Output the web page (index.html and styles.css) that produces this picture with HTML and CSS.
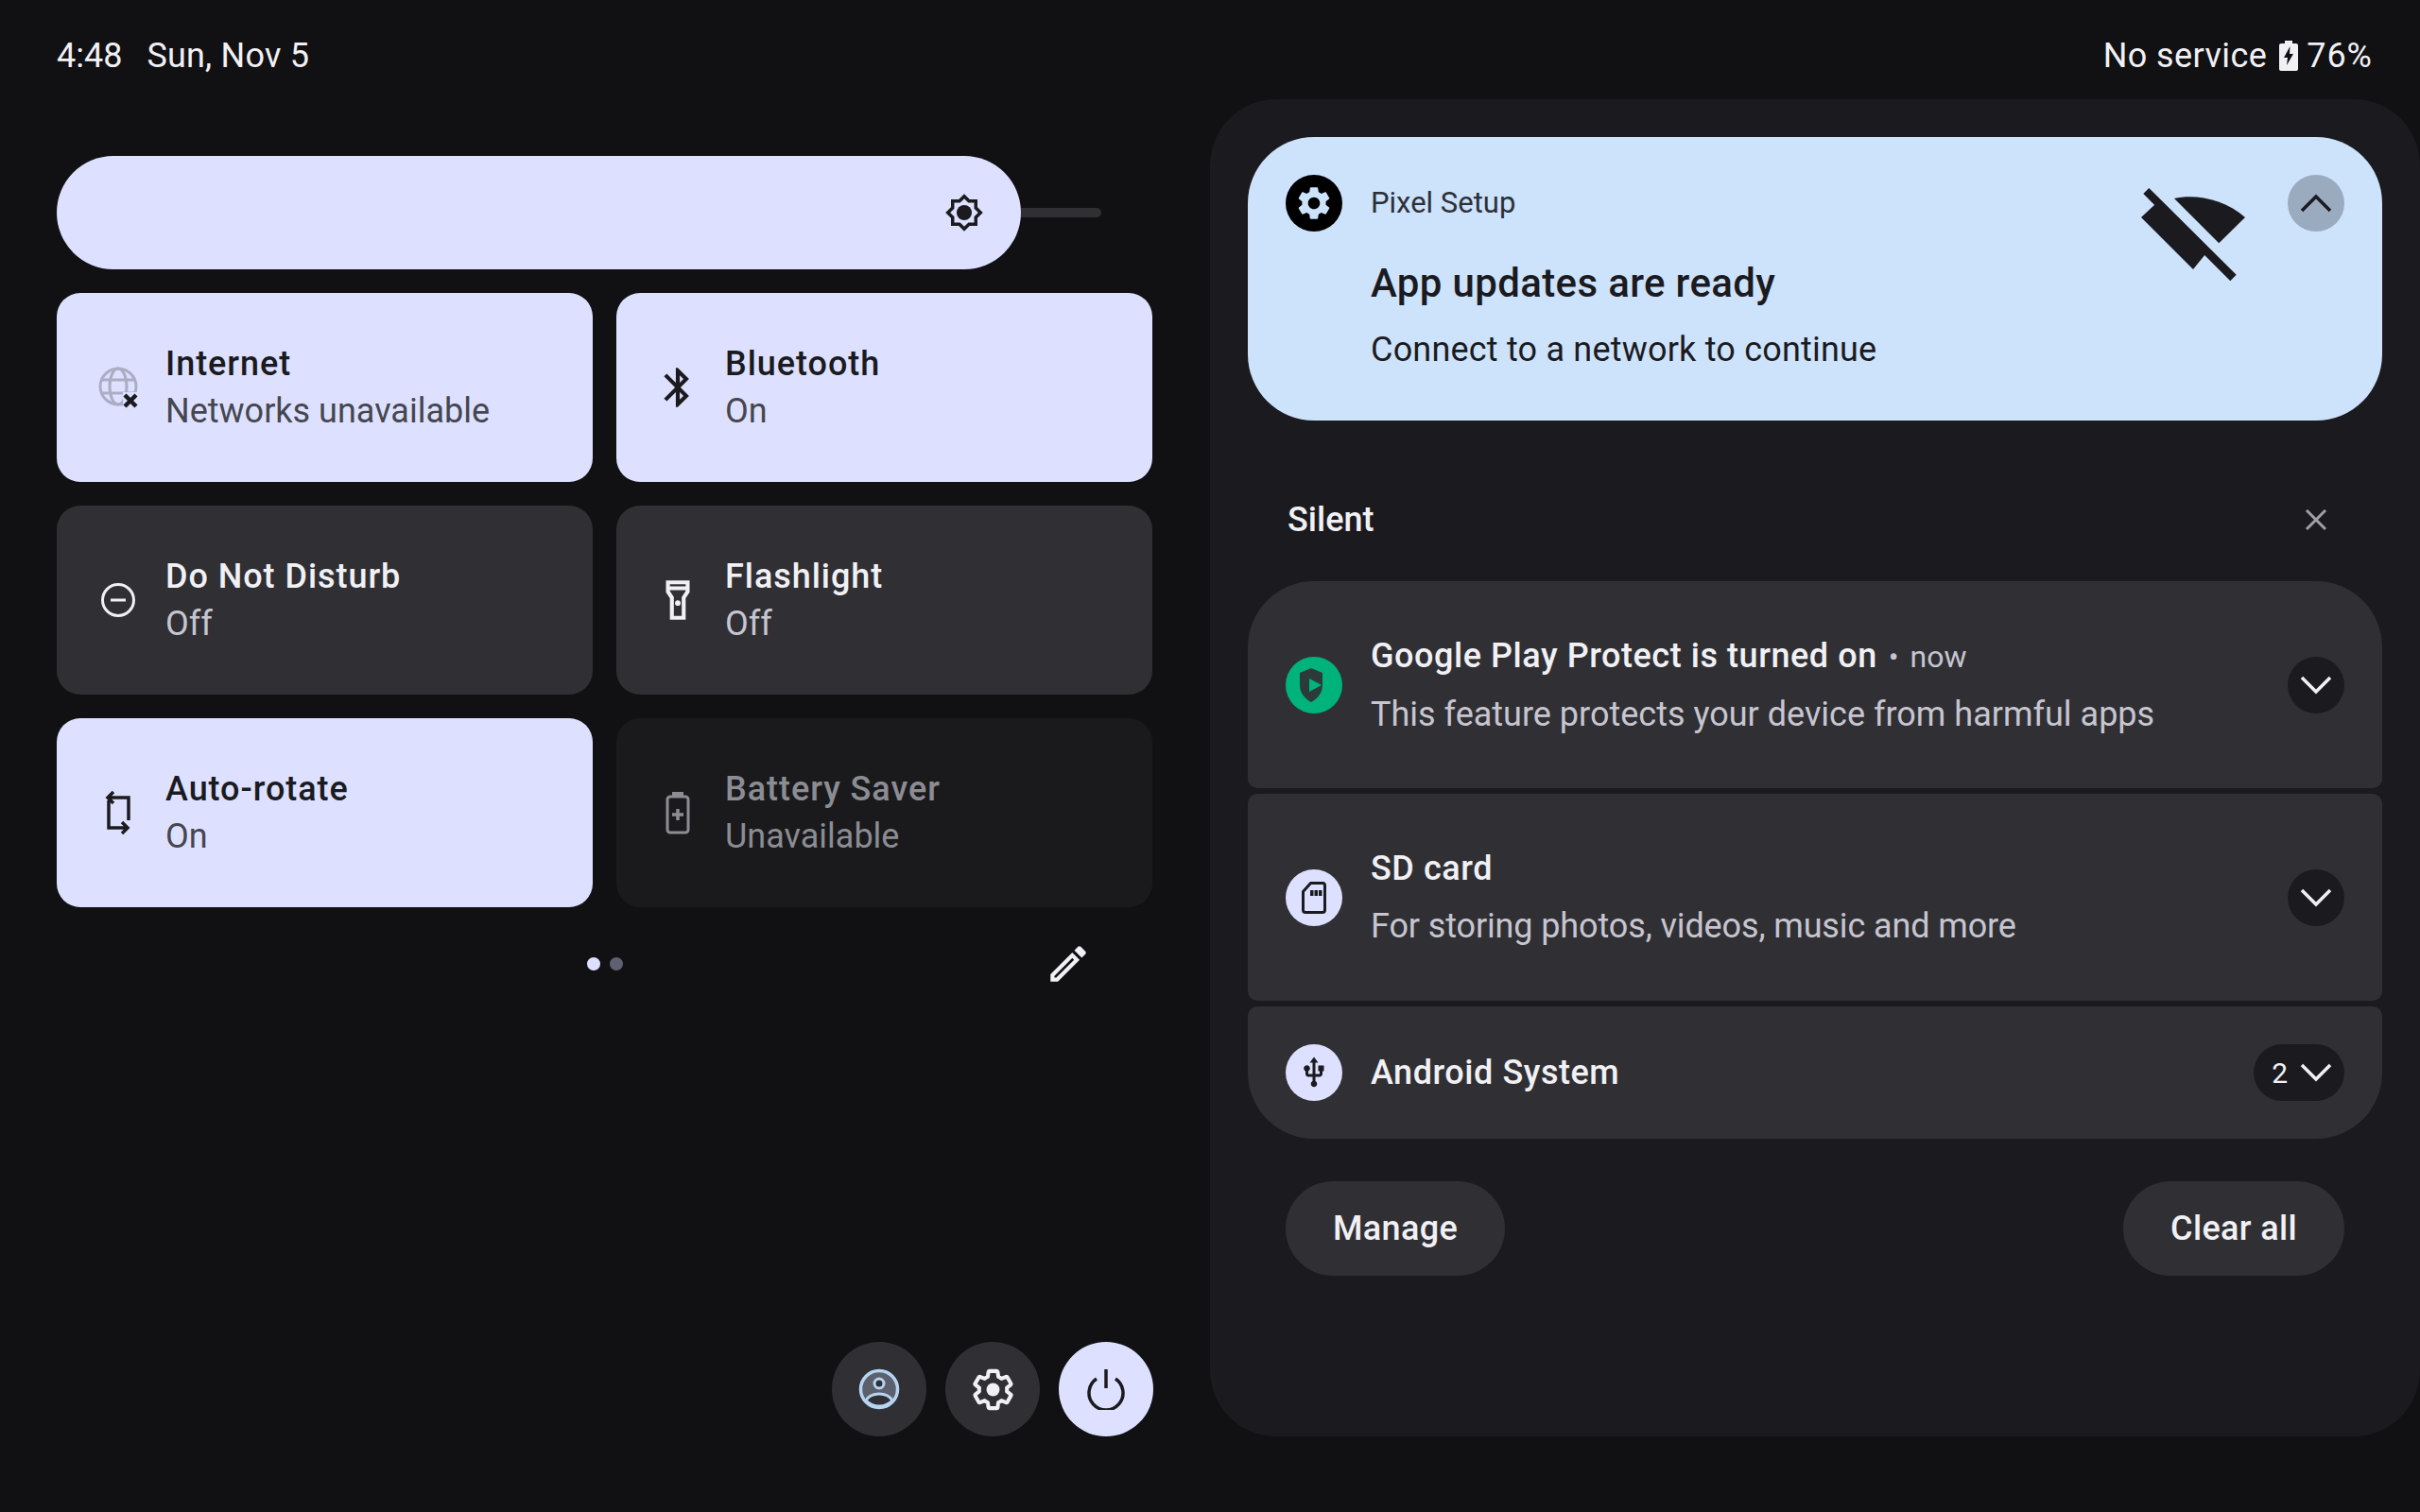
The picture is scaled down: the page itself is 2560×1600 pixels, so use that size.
FILE: index.html
```html
<!DOCTYPE html>
<html>
<head>
  <meta charset="UTF-8">
  <title>Quick Settings</title>
  <link rel="stylesheet" href="styles.css">
</head>
<body>
  <div class="status-bar">
    <div class="status-left"><span>4:48</span><span class="status-date">Sun, Nov 5</span></div>
    <div class="status-right">
      <span class="status-net">No service</span>
      <svg class="status-battery" width="20" height="32" viewBox="0 0 20 32"><path fill="#f1f0f4" d="M6 0h8v3h4a2 2 0 0 1 2 2v25a2 2 0 0 1-2 2H2a2 2 0 0 1-2-2V5a2 2 0 0 1 2-2h4z"/><path fill="#111113" d="M11.500 6 5 18h4l-1 8 7-12h-4z"/></svg>
      <span class="status-pct">76%</span>
    </div>
  </div>

  <div class="main">
    <div class="quick">
      <div class="slider">
        <div class="slider-thumb">
          <svg width="42" height="42" viewBox="0 0 24 24"><path fill="#1b1b1f" d="M20 8.690V4h-4.690L12 .69 8.690 4H4v4.690L.69 12 4 15.310V20h4.690L12 23.310 15.310 20H20v-4.690L23.310 12 20 8.690zm-2 5.790V18h-3.520L12 20.480 9.520 18H6v-3.520L3.520 12 6 9.520V6h3.520L12 3.520 14.480 6H18v3.520L20.480 12 18 14.480z"/><circle cx="12" cy="12" r="4.600" fill="#1b1b1f"/></svg>
        </div>
        <div class="slider-track"></div>
      </div>

      <div class="tiles">
        <div class="tile on">
          <div class="tile-icon">
            <svg width="44" height="44" viewBox="0 0 44 44"><g fill="none" stroke="#abadc4" stroke-width="3"><circle cx="22" cy="21" r="19"/><ellipse cx="22" cy="21" rx="9" ry="19"/><path d="M4 14h36M4 28h36"/></g><path fill="#dde1ff" d="M27 27h17v17H27z"/><path fill="none" stroke="#1b1b1f" stroke-width="4.500" d="M29 30l12 12M41 30L29 42"/></svg>
          </div>
          <div class="tile-text"><div class="tile-title">Internet</div><div class="tile-sub">Networks unavailable</div></div>
        </div>
        <div class="tile on">
          <div class="tile-icon">
            <svg width="50" height="50" viewBox="0 0 24 24"><path fill="#1b1b1f" d="M17.710 7.710L12 2h-1v7.590L6.410 5 5 6.410 10.590 12 5 17.590 6.410 19 11 14.410V22h1l5.710-5.710-4.300-4.290 4.300-4.290zM13 5.830l1.880 1.880L13 9.590V5.830zm1.880 10.460L13 18.170v-3.760l1.880 1.880z"/></svg>
          </div>
          <div class="tile-text"><div class="tile-title">Bluetooth</div><div class="tile-sub">On</div></div>
        </div>
        <div class="tile off">
          <div class="tile-icon">
            <svg width="38" height="38" viewBox="0 0 38 38"><circle cx="19" cy="19" r="16.500" fill="none" stroke="#f1f0f4" stroke-width="3"/><path stroke="#f1f0f4" stroke-width="3" d="M11 19h16"/></svg>
          </div>
          <div class="tile-text"><div class="tile-title">Do Not Disturb</div><div class="tile-sub">Off</div></div>
        </div>
        <div class="tile off">
          <div class="tile-icon">
            <svg width="50" height="50" viewBox="0 0 24 24"><path fill="#f1f0f4" d="M18 2H6v6l2 3v11h8V11l2-3V2zm-2 2v1H8V4h8zm-2 6.400V20h-4v-9.600L8 7.400V7h8v.4l-2 3z"/><circle cx="12" cy="13.500" r="1.400" fill="#f1f0f4"/></svg>
          </div>
          <div class="tile-text"><div class="tile-title">Flashlight</div><div class="tile-sub">Off</div></div>
        </div>
        <div class="tile on">
          <div class="tile-icon">
            <svg width="28" height="48" viewBox="0 0 28 48"><path fill="none" stroke="#1b1b1f" stroke-width="3.500" d="M4 8h21v24M9 2L3 8l6 6M4 11v29h20M18 34l6 6-6 6"/></svg>
          </div>
          <div class="tile-text"><div class="tile-title">Auto-rotate</div><div class="tile-sub">On</div></div>
        </div>
        <div class="tile disabled">
          <div class="tile-icon">
            <svg width="26" height="46" viewBox="0 0 26 46"><path fill="#8c8c94" d="M7 1h12v4H7z"/><rect x="2" y="6" width="22" height="38" rx="3" fill="none" stroke="#8c8c94" stroke-width="3"/><path stroke="#8c8c94" stroke-width="3.500" d="M7 25h12M13 19v12"/></svg>
          </div>
          <div class="tile-text"><div class="tile-title">Battery Saver</div><div class="tile-sub">Unavailable</div></div>
        </div>
      </div>

      <div class="pager">
        <div></div>
        <div class="dots"><span class="dot active"></span><span class="dot"></span></div>
        <svg class="pencil" width="50" height="50" viewBox="0 0 24 24"><path fill="#f1f0f4" d="M14.060 9.020l.92.92L5.920 19H5v-.92l9.060-9.060M17.660 3c-.25 0-.51.1-.7.29l-1.830 1.830 3.750 3.750 1.830-1.830c.39-.39.39-1.020 0-1.410l-2.340-2.340c-.2-.2-.45-.29-.71-.29zm-3.600 3.190L3 17.250V21h3.750L17.810 9.940l-3.750-3.750z"/></svg>
      </div>

      <div class="actions">
        <div class="round">
          <svg width="44" height="44" viewBox="0 0 44 44"><circle cx="22" cy="22" r="19.500" fill="#5b606c" stroke="#b6d4f2" stroke-width="3.500"/><circle cx="22" cy="16" r="5" fill="#303034" stroke="#b6d4f2" stroke-width="3"/><path fill="#303034" stroke="#b6d4f2" stroke-width="3" d="M8 34c3-5 9-7 14-7s11 2 14 7c-3.500 4-8.500 6-14 6s-10.500-2-14-6z"/></svg>
        </div>
        <div class="round">
          <svg width="49" height="49" viewBox="0 0 24 24"><path fill="none" stroke="#f1f0f4" stroke-width="2" stroke-linejoin="round" d="M19.140 12.940c.04-.3.06-.61.06-.94 0-.32-.02-.64-.07-.94l2.030-1.580c.18-.14.23-.41.12-.61l-1.920-3.320c-.12-.22-.37-.29-.59-.22l-2.390.96c-.5-.38-1.030-.7-1.620-.94l-.36-2.540c-.04-.24-.24-.41-.48-.41h-3.840c-.24 0-.43.17-.47.41l-.36 2.540c-.59.24-1.130.57-1.620.94l-2.390-.96c-.22-.08-.47 0-.59.22L2.740 8.870c-.12.21-.08.47.12.61l2.030 1.580c-.05.3-.09.63-.09.94s.02.64.07.94l-2.030 1.580c-.18.14-.23.41-.12.61l1.920 3.320c.12.22.37.29.59.22l2.390-.96c.5.38 1.030.7 1.620.94l.36 2.540c.05.24.24.41.48.41h3.840c.24 0 .44-.17.47-.41l.36-2.540c.59-.24 1.130-.56 1.620-.94l2.390.96c.22.08.47 0 .59-.22l1.920-3.320c.12-.22.07-.47-.12-.61l-2.010-1.580z"/><circle cx="12" cy="12" r="3.400" fill="#f1f0f4"/></svg>
        </div>
        <div class="round power">
          <svg width="42" height="44" viewBox="0 0 42 44"><path fill="none" stroke="#1b1b1f" stroke-width="3.500" d="M11 11a18 18 0 1 0 20 0"/><path stroke="#1b1b1f" stroke-width="3.500" d="M21 1v20"/></svg>
        </div>
      </div>
    </div>

    <div class="panel">
      <div class="note-top">
        <div class="app-icon black">
          <svg width="42" height="42" viewBox="0 0 24 24"><path fill="#cde2fb" d="M19.140 12.940c.04-.3.06-.61.06-.94 0-.32-.02-.64-.07-.94l2.030-1.580c.18-.14.23-.41.12-.61l-1.920-3.320c-.12-.22-.37-.29-.59-.22l-2.390.96c-.5-.38-1.030-.7-1.620-.94l-.36-2.540c-.04-.24-.24-.41-.48-.41h-3.840c-.24 0-.43.17-.47.41l-.36 2.540c-.59.24-1.130.57-1.620.94l-2.390-.96c-.22-.08-.47 0-.59.22L2.740 8.870c-.12.21-.08.47.12.61l2.030 1.580c-.05.3-.09.63-.09.94s.02.64.07.94l-2.030 1.580c-.18.14-.23.41-.12.61l1.920 3.320c.12.22.37.29.59.22l2.390-.96c.5.38 1.030.7 1.620.94l.36 2.540c.05.24.24.41.48.41h3.840c.24 0 .44-.17.47-.41l.36-2.540c.59-.24 1.130-.56 1.620-.94l2.390.96c.22.08.47 0 .59-.22l1.920-3.320c.12-.22.07-.47-.12-.61l-2.010-1.580zM12 15.600c-1.980 0-3.600-1.620-3.600-3.600s1.620-3.600 3.600-3.600 3.600 1.620 3.600 3.600-1.620 3.600-3.600 3.600z"/></svg>
        </div>
        <div class="note-top-text">
          <div class="note-app">Pixel Setup</div>
          <div class="note-head">App updates are ready</div>
          <div class="note-desc">Connect to a network to continue</div>
        </div>
        <svg class="wifi-off" width="110" height="100" viewBox="0 0 110 100"><g fill="#1b1b1f"><path d="M2.300 6L8.300 0l92.400 91.700-6.400 6.600z"/><path d="M0 31l15-14 53 53-13 16z"/><path d="M35 11C58 6 88 12 110 31L82.300 58.300z"/></g></svg>
        <div class="chevron up">
          <svg width="34" height="22" viewBox="0 0 34 22"><path fill="none" stroke="#1b1b1f" stroke-width="3.500" d="M2 19L17 4l15 15"/></svg>
        </div>
      </div>

      <div class="silent-row">
        <span class="silent-label">Silent</span>
        <svg width="24" height="24" viewBox="0 0 24 24"><path fill="none" stroke="#a0a0a6" stroke-width="3" d="M2 2l20 20M22 2L2 22"/></svg>
      </div>

      <div class="note-list">
        <div class="note first">
          <div class="app-icon green">
            <svg width="60" height="60" viewBox="0 0 60 60"><path fill="#2c3b3a" d="M27 12l12 5v13c0 8-5 14-12 18-7-4-12-10-12-18V17z"/><path fill="#00b37a" d="M25 23l13 7-13 7z"/></svg>
          </div>
          <div class="note-text">
            <div class="note-title">Google Play Protect is turned on<span class="note-time"><span class="note-bullet">•</span>now</span></div>
            <div class="note-sub">This feature protects your device from harmful apps</div>
          </div>
          <div class="chevron"><svg width="34" height="22" viewBox="0 0 34 22"><path fill="none" stroke="#f1f0f4" stroke-width="3.500" d="M2 3l15 15L32 3"/></svg></div>
        </div>
        <div class="note">
          <div class="app-icon lilac">
            <svg width="26" height="34" viewBox="0 0 26 34"><path fill="none" stroke="#1b1b1f" stroke-width="3" stroke-linejoin="round" d="M9.500 1.500H22a2.500 2.500 0 0 1 2.500 2.500v26a2.500 2.500 0 0 1-2.500 2.500H4A2.500 2.500 0 0 1 1.500 30V10.500z"/><path fill="#1b1b1f" d="M9 9h3.500v6H9zM13.500 9H17v6h-3.500zM18 9h3.500v6H18z"/></svg>
          </div>
          <div class="note-text">
            <div class="note-title">SD card</div>
            <div class="note-sub tight">For storing photos, videos, music and more</div>
          </div>
          <div class="chevron"><svg width="34" height="22" viewBox="0 0 34 22"><path fill="none" stroke="#f1f0f4" stroke-width="3.500" d="M2 3l15 15L32 3"/></svg></div>
        </div>
        <div class="note last">
          <div class="app-icon lilac">
            <svg width="36" height="36" viewBox="0 0 24 24"><path fill="#1b1b1f" d="M15 7v4h1v2h-3V5h2l-3-4-3 4h2v8H8v-2.070c.7-.37 1.200-1.080 1.200-1.930 0-1.210-.99-2.200-2.200-2.200-1.210 0-2.200.99-2.200 2.200 0 .85.5 1.560 1.200 1.930V13c0 1.110.89 2 2 2h3v3.050c-.71.37-1.200 1.100-1.200 1.950 0 1.220.99 2.200 2.200 2.200 1.210 0 2.200-.98 2.200-2.200 0-.85-.49-1.580-1.200-1.950V15h3c1.110 0 2-.89 2-2v-2h1V7h-4z"/></svg>
          </div>
          <div class="note-text">
            <div class="note-title">Android System</div>
          </div>
          <div class="chevron count"><span>2</span><svg width="34" height="22" viewBox="0 0 34 22"><path fill="none" stroke="#f1f0f4" stroke-width="3.500" d="M2 3l15 15L32 3"/></svg></div>
        </div>
      </div>

      <div class="panel-footer">
        <div class="pill">Manage</div>
        <div class="pill">Clear all</div>
      </div>
    </div>
  </div>
</body>
</html>
```

FILE: styles.css
```css
body {
  margin: 0;
  width: 2560px;
  height: 1600px;
  overflow: hidden;
  background-color: #111113;
  color: #f1f0f4;
  font-family: "Roboto", "Liberation Sans", sans-serif;
}

.status-bar {
  height: 105px;
  box-sizing: border-box;
  padding: 12px 50px 0 60px;
  display: flex;
  justify-content: space-between;
  align-items: center;
  font-size: 36px;
}

.status-left {
  display: flex;
  gap: 26px;
}

.status-date {
  letter-spacing: 0.2px;
}

.status-right {
  display: flex;
  align-items: center;
  gap: 9px;
}

.status-net {
  letter-spacing: 0.4px;
  margin-right: 4px;
}

.status-pct {
  letter-spacing: 1px;
}

.main {
  display: flex;
  height: 1415px;
}

/* left column */
.quick {
  width: 1280px;
  box-sizing: border-box;
  padding: 60px 60px 0 60px;
  display: flex;
  flex-direction: column;
}

.slider {
  display: flex;
  align-items: center;
}

.slider-thumb {
  width: 1020px;
  height: 120px;
  box-sizing: border-box;
  padding-right: 39px;
  background-color: #dde1ff;
  border-radius: 60px;
  display: flex;
  align-items: center;
  justify-content: flex-end;
}

.slider-track {
  width: 85px;
  height: 10px;
  background-color: #303034;
  border-radius: 0 5px 5px 0;
}

.tiles {
  margin-top: 25px;
  display: grid;
  grid-template-columns: 567px 567px;
  grid-auto-rows: 200px;
  gap: 25px;
}

.tile {
  display: flex;
  align-items: center;
  gap: 30px;
  padding-left: 45px;
  border-radius: 25px;
}

.tile.on {
  background-color: #dde1ff;
  color: #1b1b1f;
}

.tile.off {
  background-color: #303034;
}

.tile.disabled {
  background-color: #1a1a1c;
  color: #8c8c94;
}

.tile-icon {
  width: 40px;
  height: 40px;
  display: flex;
  align-items: center;
  justify-content: center;
}

.tile-icon svg {
  flex-shrink: 0;
}

.tile-title {
  font-size: 36px;
  font-weight: 500;
  letter-spacing: 0.95px;
  line-height: 50px;
}

.tile-sub {
  font-size: 36px;
  line-height: 50px;
}

.tile.on .tile-sub {
  color: #46464f;
}

.tile.off .tile-sub {
  color: #c7c5d0;
}

.pager {
  margin-top: 30px;
  height: 60px;
  display: grid;
  grid-template-columns: 1fr auto 1fr;
  align-items: center;
}

.dots {
  display: flex;
  gap: 10px;
}

.dot {
  width: 14px;
  height: 14px;
  border-radius: 50%;
  background-color: #5f6172;
}

.dot.active {
  background-color: #dde1ff;
}

.pencil {
  justify-self: end;
  margin-right: 65px;
}

.actions {
  margin-top: auto;
  display: flex;
  justify-content: flex-end;
  gap: 20px;
}

.round {
  width: 100px;
  height: 100px;
  border-radius: 50%;
  background-color: #303034;
  display: flex;
  align-items: center;
  justify-content: center;
}

.round.power {
  background-color: #dde1ff;
}

/* notification panel */
.panel {
  width: 1280px;
  box-sizing: border-box;
  padding: 40px 40px 0;
  background-color: #1b1b1f;
  border-radius: 70px;
}

.note-top {
  height: 300px;
  box-sizing: border-box;
  padding: 40px 40px 0;
  background-color: #cde2fb;
  color: #1b1b1f;
  border-radius: 70px;
  display: flex;
  align-items: flex-start;
}

.app-icon {
  width: 60px;
  height: 60px;
  flex-shrink: 0;
  border-radius: 50%;
  display: flex;
  align-items: center;
  justify-content: center;
}

.app-icon.black {
  background-color: #000;
}

.app-icon.green {
  background-color: #00b37a;
}

.app-icon.lilac {
  background-color: #dde1ff;
}

.note-top-text {
  flex: 1;
  margin-left: 30px;
}

.note-app {
  font-size: 31px;
  line-height: 60px;
  color: #2c3038;
}

.note-head {
  margin-top: 30px;
  font-size: 42px;
  font-weight: 500;
  letter-spacing: 0.35px;
  line-height: 50px;
}

.note-desc {
  margin-top: 20px;
  font-size: 36px;
  letter-spacing: 0.2px;
  line-height: 50px;
}

.wifi-off {
  margin: 14px 45px 0 0;
}

.chevron {
  width: 60px;
  height: 60px;
  flex-shrink: 0;
  background-color: #1b1b1f;
  border-radius: 30px;
  display: flex;
  align-items: center;
  justify-content: center;
}

.chevron.up {
  background-color: #9aaabf;
}

.chevron.count {
  width: 96px;
  justify-content: flex-end;
  gap: 13px;
  padding-right: 13px;
  box-sizing: border-box;
  font-size: 30px;
}

.silent-row {
  height: 130px;
  margin-top: 40px;
  padding: 0 58px 0 42px;
  display: flex;
  align-items: center;
  justify-content: space-between;
  box-sizing: border-box;
}

.silent-label {
  font-size: 36px;
  font-weight: 500;
}

.note-list {
  display: flex;
  flex-direction: column;
  gap: 6px;
}

.note {
  height: 219px;
  box-sizing: border-box;
  padding: 0 40px;
  background-color: #303034;
  border-radius: 10px;
  display: flex;
  align-items: center;
  gap: 30px;
}

.note.first {
  border-radius: 70px 70px 10px 10px;
}

.note.last {
  height: 140px;
  border-radius: 10px 10px 70px 70px;
}

.note-text {
  flex: 1;
}

.note-title {
  font-size: 36px;
  font-weight: 500;
  letter-spacing: 0.55px;
  line-height: 50px;
}

.note-time {
  font-size: 32px;
  font-weight: 400;
  letter-spacing: 0;
  color: #c7c5d0;
}

.note-bullet {
  margin: 0 12px;
}

.note-sub {
  margin-top: 11px;
  font-size: 36px;
  line-height: 50px;
  color: #c7c5d0;
}

.note-sub.tight {
  letter-spacing: -0.12px;
}

.panel-footer {
  margin: 45px 40px 0;
  display: flex;
  justify-content: space-between;
}

.pill {
  height: 100px;
  padding: 0 50px;
  background-color: #303034;
  border-radius: 50px;
  display: flex;
  align-items: center;
  font-size: 36px;
  font-weight: 500;
  letter-spacing: 0.35px;
}
```
